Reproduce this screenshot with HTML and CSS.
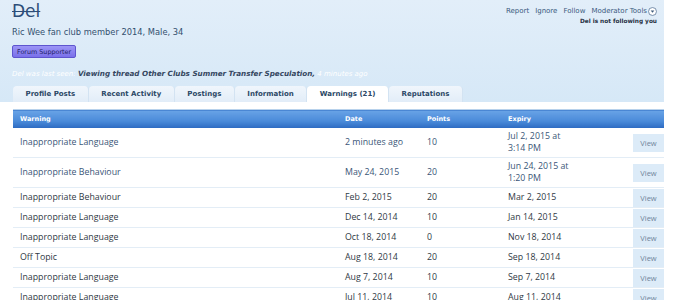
FILE: index.html
```html
<!DOCTYPE html>
<html lang="en">
<head>
  <meta charset="UTF-8">
  <title>Del - Member Profile</title>
  <link rel="stylesheet" href="styles.css">
</head>
<body>
  <div class="page">
    <div class="profile-header">
      <div class="top-row">
        <div class="member-info">
          <h1 class="username">Del</h1>
          <div class="user-title">Ric Wee fan club member 2014, Male, 34</div>
          <span class="banner">Forum Supporter</span>
        </div>
        <div class="member-actions">
          <div class="action-links">
            <a href="#">Report</a>
            <a href="#">Ignore</a>
            <a href="#">Follow</a>
            <a href="#" class="mod-tools">Moderator Tools
              <svg width="9" height="9" viewBox="0 0 10 10">
                <circle cx="5" cy="5" r="4.4" fill="#fff" stroke="#5b7899" stroke-width="0.9"/>
                <path d="M3 4 L7 4 L5 6.4 Z" fill="#3b5878"/>
              </svg>
            </a>
          </div>
          <div class="follow-status">Del is not following you</div>
        </div>
      </div>
      <div class="last-seen">
        <span class="muted">Del was last seen:</span>
        <a href="#">Viewing thread Other Clubs Summer Transfer Speculation,</a><span class="muted"> 4 minutes ago</span>
      </div>
      <ul class="tabs">
        <li>Profile Posts</li>
        <li>Recent Activity</li>
        <li>Postings</li>
        <li>Information</li>
        <li class="active">Warnings (21)</li>
        <li>Reputations</li>
      </ul>
    </div>

    <table class="warnings">
      <colgroup>
        <col class="col-warning">
        <col class="col-date">
        <col class="col-points">
        <col class="col-expiry">
        <col class="col-view">
      </colgroup>
      <thead>
        <tr>
          <th>Warning</th>
          <th>Date</th>
          <th>Points</th>
          <th>Expiry</th>
          <th></th>
        </tr>
      </thead>
      <tbody>
        <tr class="recent">
          <td>Inappropriate Language</td>
          <td>2 minutes ago</td>
          <td>10</td>
          <td>Jul 2, 2015 at 3:14 PM</td>
          <td class="view-cell"><a href="#" class="view-btn">View</a></td>
        </tr>
        <tr class="recent">
          <td>Inappropriate Behaviour</td>
          <td>May 24, 2015</td>
          <td>20</td>
          <td>Jun 24, 2015 at 1:20 PM</td>
          <td class="view-cell"><a href="#" class="view-btn">View</a></td>
        </tr>
        <tr>
          <td>Inappropriate Behaviour</td>
          <td>Feb 2, 2015</td>
          <td>20</td>
          <td>Mar 2, 2015</td>
          <td class="view-cell"><a href="#" class="view-btn">View</a></td>
        </tr>
        <tr>
          <td>Inappropriate Language</td>
          <td>Dec 14, 2014</td>
          <td>10</td>
          <td>Jan 14, 2015</td>
          <td class="view-cell"><a href="#" class="view-btn">View</a></td>
        </tr>
        <tr>
          <td>Inappropriate Language</td>
          <td>Oct 18, 2014</td>
          <td>0</td>
          <td>Nov 18, 2014</td>
          <td class="view-cell"><a href="#" class="view-btn">View</a></td>
        </tr>
        <tr>
          <td>Off Topic</td>
          <td>Aug 18, 2014</td>
          <td>20</td>
          <td>Sep 18, 2014</td>
          <td class="view-cell"><a href="#" class="view-btn">View</a></td>
        </tr>
        <tr>
          <td>Inappropriate Language</td>
          <td>Aug 7, 2014</td>
          <td>10</td>
          <td>Sep 7, 2014</td>
          <td class="view-cell"><a href="#" class="view-btn">View</a></td>
        </tr>
        <tr>
          <td>Inappropriate Language</td>
          <td>Jul 11, 2014</td>
          <td>10</td>
          <td>Aug 11, 2014</td>
          <td class="view-cell"><a href="#" class="view-btn">View</a></td>
        </tr>
      </tbody>
    </table>
  </div>
</body>
</html>
```

FILE: styles.css
```css
body {
  margin: 0;
  background: #fff;
  font-family: 'DejaVu Sans', Verdana, sans-serif;
  color: #2b4a6b;
  overflow: hidden;
}
a {
  color: inherit;
  text-decoration: none;
}
.page {
  width: 664px;
}
.profile-header {
  background: linear-gradient(to bottom, #e2eef9, #d6e8f7);
  padding: 0 0 0 12px;
}
.top-row {
  display: flex;
  justify-content: space-between;
  align-items: flex-start;
}
.username {
  margin: 0;
  font-family: 'DejaVu Sans', sans-serif;
  font-size: 17px;
  font-weight: normal;
  line-height: 22px;
  color: #2d4d78;
  text-decoration: line-through;
}
.user-title {
  margin-top: 3px;
  font-size: 8.3px;
  line-height: 14px;
  color: #33506f;
}
.banner {
  display: inline-block;
  margin-top: 3px;
  height: 13px;
  padding: 0 4px;
  font-size: 6.4px;
  line-height: 12px;
  color: #1e2266;
  background: linear-gradient(to bottom, #9c95f6, #7a70ea);
  border: 1px solid #5e55cf;
  border-radius: 2px;
  box-sizing: border-box;
}
.member-actions {
  padding: 5px 7px 0 0;
  text-align: right;
}
.action-links {
  display: flex;
  gap: 6px;
  font-size: 7px;
  line-height: 12px;
  color: #3b5a7e;
}
.mod-tools {
  display: flex;
  align-items: center;
  gap: 1px;
}
.follow-status {
  font-size: 5.8px;
  font-weight: bold;
  line-height: 9px;
  color: #1f2f42;
}
.last-seen {
  margin-top: 9px;
  font-size: 7px;
  line-height: 14px;
  font-style: italic;
  color: #2a3d58;
}
.last-seen a {
  font-size: 7.2px;
  font-weight: bold;
  color: #34465f;
}
.last-seen .muted {
  color: #fff;
}
.tabs {
  display: flex;
  list-style: none;
  margin: 5px 0 0;
  padding: 0 0 0 1px;
}
.tabs li {
  height: 16px;
  padding: 0 12.5px;
  font-size: 7px;
  font-weight: bold;
  line-height: 16px;
  color: #2c4866;
  background: linear-gradient(to bottom, #f0f6fc, #e2edf8);
  border-right: 1px solid #d3e3f2;
  border-radius: 4px 4px 0 0;
  box-sizing: border-box;
}
.tabs li.active {
  background: #fff;
}
.warnings {
  margin: 7px 0 0 13px;
  width: 651px;
  border-collapse: collapse;
  table-layout: fixed;
  font-family: 'Open Sans', sans-serif;
  font-size: 8.8px;
  border-top: 1px solid #b8d2ec;
}
.col-warning { width: 325px; }
.col-date { width: 82px; }
.col-points { width: 81px; }
.col-expiry { width: 79px; }
.col-view { width: 84px; }
.warnings th {
  height: 18px;
  padding: 0 7px;
  text-align: left;
  font-family: 'DejaVu Sans', sans-serif;
  font-size: 6.5px;
  font-weight: bold;
  color: #fff;
  background: linear-gradient(to bottom, #69a3e6, #4a8ad9 60%, #2b69c0);
}
.warnings td {
  padding: 3px 7px;
  line-height: 11.5px;
  color: #2f3944;
  border-bottom: 1px solid #e3edf6;
}
.warnings tr.recent td {
  color: #3a5677;
}
.warnings td.view-cell {
  padding: 0.5px 0;
  text-align: right;
}
.view-btn {
  display: inline-block;
  width: 31px;
  height: 18px;
  font-size: 7.5px;
  line-height: 18px;
  text-align: center;
  color: #71859b;
  background: #dcebf8;
  vertical-align: middle;
}
```
